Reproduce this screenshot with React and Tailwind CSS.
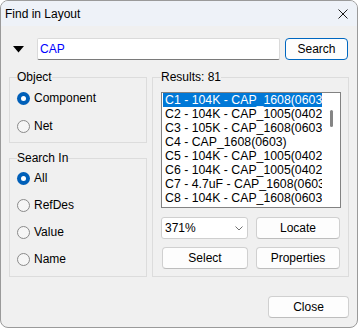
import React from 'react';

const results = [
    'C1 - 104K - CAP_1608(0603)',
    'C2 - 104K - CAP_1005(0402)',
    'C3 - 105K - CAP_1608(0603)',
    'C4 - CAP_1608(0603)',
    'C5 - 104K - CAP_1005(0402)',
    'C6 - 104K - CAP_1005(0402)',
    'C7 - 4.7uF - CAP_1608(0603)',
    'C8 - 104K - CAP_1608(0603)',
    'C9 - 104K - CAP_1608(0603)',
];

const Radio = ({ label, checked }) => (
    <label className="flex h-[20px] items-center gap-[4px]">
        {checked ? (
            <span className="flex h-[13px] w-[13px] items-center justify-center rounded-full bg-[#005fb8]">
                <span className="h-[5px] w-[5px] rounded-full bg-white" />
            </span>
        ) : (
            <span className="h-[13px] w-[13px] rounded-full border border-[#8a8a8a] bg-[#f6f6f6]" />
        )}
        <span>{label}</span>
    </label>
);

const Btn = ({ children, className = '' }) => (
    <button className={`flex h-[22px] items-center justify-center rounded-[4px] border bg-[#fdfdfd] ${className}`}>{children}</button>
);

export default function App() {
    return (
        <div className="flex h-[328px] w-[358px] flex-col overflow-hidden rounded-[8px] border border-[#9a9a9a] bg-[#f0f0f0] text-[12px] leading-[14px] text-black" style={{ fontFamily: '"Liberation Sans", Arial, sans-serif' }}>
            <div className="flex h-[25px] shrink-0 items-center justify-between bg-[#eef2f8] pl-[4px] pr-[9px]">
                <span>Find in Layout</span>
                <svg width="10" height="10" viewBox="0 0 10 10" className="text-[#1a1a1a]">
                    <path d="M0.5 0.5 L9.5 9.5 M9.5 0.5 L0.5 9.5" stroke="currentColor" strokeWidth="1" fill="none" />
                </svg>
            </div>

            <div className="flex flex-1 flex-col pl-[8px] pr-[8px] pt-[12px]">
                <div className="flex h-[22px] items-center">
                    <svg width="11" height="7" viewBox="0 0 11 7" className="ml-[4px]">
                        <polygon points="0,0 11,0 5.5,6.5" fill="#000" />
                    </svg>
                    <div className="ml-[13px] flex h-[22px] w-[243px] items-center rounded-[2px] border border-[#dadada] border-b-[#7a7a7a] bg-white pl-[2px] text-[#0000ff]">CAP</div>
                    <Btn className="ml-[5px] mr-[1px] w-[63px] border-[#0067c0]">Search</Btn>
                </div>

                <div className="mt-[10px] flex gap-[5px]">
                    <div className="flex w-[138px] flex-col">
                        <fieldset className="border border-[#dcdcdc] px-[7px] pb-[6px] pt-[4px]">
                            <legend className="leading-[14px]">Object</legend>
                            <div className="flex flex-col gap-[8px]">
                                <Radio label="Component" checked />
                                <Radio label="Net" />
                            </div>
                        </fieldset>
                        <fieldset className="mt-[8px] border border-[#dcdcdc] px-[7px] pb-[7px] pt-[3px]">
                            <legend className="leading-[14px]">Search In</legend>
                            <div className="flex flex-col gap-[7px]">
                                <Radio label="All" checked />
                                <Radio label="RefDes" />
                                <Radio label="Value" />
                                <Radio label="Name" />
                            </div>
                        </fieldset>
                    </div>

                    <fieldset className="w-[197px] border border-[#dcdcdc] pb-[7px] pl-[8px] pr-[7px] pt-[8px]">
                        <legend className="leading-[14px]">Results: 81</legend>
                        <div className="flex h-[116px] w-[180px] overflow-hidden border border-[#828282] bg-white">
                            <div className="w-[160px] shrink-0 overflow-hidden pl-[1px] text-[12.3px]">
                                {results.map((item, index) => (
                                    <div key={item} className={`h-[14px] overflow-hidden whitespace-nowrap pl-[2px] leading-[14px] ${index === 0 ? 'bg-[#0078d7] text-white' : ''}`}>{item}</div>
                                ))}
                            </div>
                            <div className="flex flex-1 justify-center pl-[1px] pt-[17px]">
                                <div className="h-[17px] w-[3px] rounded-full bg-[#858585]" />
                            </div>
                        </div>
                        <div className="mt-[9px] grid grid-cols-[87px_84px] gap-x-[8px] gap-y-[8px]">
                            <div className="flex h-[22px] items-center justify-between rounded-[3px] border border-[#cfcfcf] bg-white pl-[3px] pr-[4px]">
                                <span>371%</span>
                                <svg width="8" height="5" viewBox="0 0 8 5">
                                    <polyline points="0.5,0.5 4,4 7.5,0.5" fill="none" stroke="#707070" strokeWidth="1" />
                                </svg>
                            </div>
                            <Btn className="border-[#d0d0d0] border-b-[#bdbdbd]">Locate</Btn>
                            <Btn className="ml-[1px] border-[#d0d0d0] border-b-[#bdbdbd]">Select</Btn>
                            <Btn className="border-[#d0d0d0] border-b-[#bdbdbd]">Properties</Btn>
                        </div>
                    </fieldset>
                </div>

                <div className="mt-[19px] flex justify-end">
                    <Btn className="w-[81px] border-[#d0d0d0] border-b-[#bdbdbd]">Close</Btn>
                </div>
            </div>
        </div>
    );
}
